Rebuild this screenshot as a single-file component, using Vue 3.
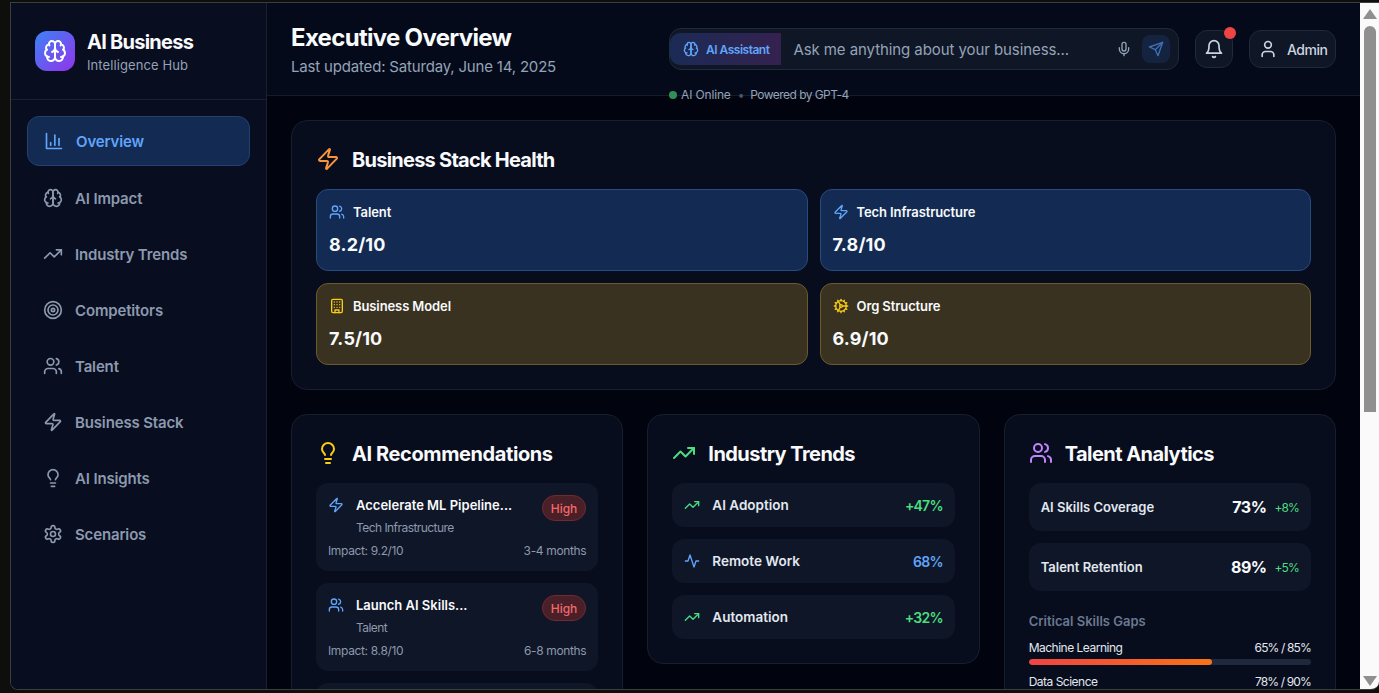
<script setup>
// icon bodies, all on a 24x24 grid
const icons = {
  brain: '<path d="M12 5a3 3 0 1 0-5.997.125 4 4 0 0 0-2.526 5.77 4 4 0 0 0 .556 6.588A4 4 0 1 0 12 18Z"/><path d="M12 5a3 3 0 1 1 5.997.125 4 4 0 0 1 2.526 5.77 4 4 0 0 1-.556 6.588A4 4 0 1 1 12 18Z"/><path d="M15 13a4.5 4.5 0 0 1-3-4 4.5 4.5 0 0 1-3 4"/><path d="M17.599 6.5a3 3 0 0 0 .399-1.375"/><path d="M6.003 5.125A3 3 0 0 0 6.401 6.5"/><path d="M3.477 10.896a4 4 0 0 1 .585-.396"/><path d="M19.938 10.5a4 4 0 0 1 .585.396"/><path d="M6 18a4 4 0 0 1-1.967-.516"/><path d="M19.967 17.484A4 4 0 0 1 18 18"/>',
  chart: '<path d="M3 3v18h18"/><path d="M18 17V9"/><path d="M13 17V5"/><path d="M8 17v-3"/>',
  trend: '<polyline points="22 7 13.5 15.5 8.5 10.5 2 17"/><polyline points="16 7 22 7 22 13"/>',
  target: '<circle cx="12" cy="12" r="10"/><circle cx="12" cy="12" r="6"/><circle cx="12" cy="12" r="2"/>',
  users: '<path d="M16 21v-2a4 4 0 0 0-4-4H6a4 4 0 0 0-4 4v2"/><circle cx="9" cy="7" r="4"/><path d="M22 21v-2a4 4 0 0 0-3-3.87"/><path d="M16 3.13a4 4 0 0 1 0 7.75"/>',
  zap: '<path d="M4 14a1 1 0 0 1-.78-1.63l9.9-10.2a.5.5 0 0 1 .86.46l-1.92 6.02A1 1 0 0 0 13 10h7a1 1 0 0 1 .78 1.63l-9.9 10.2a.5.5 0 0 1-.86-.46l1.92-6.02A1 1 0 0 0 11 14z"/>',
  bulb: '<path d="M15 14c.2-1 .7-1.7 1.5-2.5 1-.9 1.5-2.2 1.5-3.5A6 6 0 0 0 6 8c0 1 .2 2.2 1.5 3.5.7.7 1.3 1.5 1.5 2.5"/><path d="M9 18h6"/><path d="M10 22h4"/>',
  settings: '<path d="M12.22 2h-.44a2 2 0 0 0-2 2v.18a2 2 0 0 1-1 1.73l-.43.25a2 2 0 0 1-2 0l-.15-.08a2 2 0 0 0-2.73.73l-.22.38a2 2 0 0 0 .73 2.73l.15.1a2 2 0 0 1 1 1.72v.51a2 2 0 0 1-1 1.74l-.15.09a2 2 0 0 0-.73 2.73l.22.38a2 2 0 0 0 2.73.73l.15-.08a2 2 0 0 1 2 0l.43.25a2 2 0 0 1 1 1.73V20a2 2 0 0 0 2 2h.44a2 2 0 0 0 2-2v-.18a2 2 0 0 1 1-1.73l.43-.25a2 2 0 0 1 2 0l.15.08a2 2 0 0 0 2.73-.73l.22-.39a2 2 0 0 0-.73-2.73l-.15-.08a2 2 0 0 1-1-1.74v-.5a2 2 0 0 1 1-1.74l.15-.09a2 2 0 0 0 .73-2.73l-.22-.38a2 2 0 0 0-2.73-.73l-.15.08a2 2 0 0 1-2 0l-.43-.25a2 2 0 0 1-1-1.73V4a2 2 0 0 0-2-2z"/><circle cx="12" cy="12" r="3"/>',
  mic: '<path d="M12 2a3 3 0 0 0-3 3v7a3 3 0 0 0 6 0V5a3 3 0 0 0-3-3Z"/><path d="M19 10v2a7 7 0 0 1-14 0v-2"/><line x1="12" x2="12" y1="19" y2="22"/>',
  send: '<path d="m22 2-7 20-4-9-9-4Z"/><path d="M22 2 11 13"/>',
  bell: '<path d="M6 8a6 6 0 0 1 12 0c0 7 3 9 3 9H3s3-2 3-9"/><path d="M10.3 21a1.94 1.94 0 0 0 3.4 0"/>',
  user: '<path d="M19 21v-2a4 4 0 0 0-4-4H9a4 4 0 0 0-4 4v2"/><circle cx="12" cy="7" r="4"/>',
  building: '<rect width="16" height="20" x="4" y="2" rx="2" ry="2"/><path d="M9 22v-4h6v4"/><path d="M8 6h.01"/><path d="M16 6h.01"/><path d="M12 6h.01"/><path d="M12 10h.01"/><path d="M12 14h.01"/><path d="M16 10h.01"/><path d="M16 14h.01"/><path d="M8 10h.01"/><path d="M8 14h.01"/>',
  cog: '<path d="M12 20a8 8 0 1 0 0-16 8 8 0 0 0 0 16Z"/><path d="M12 14a2 2 0 1 0 0-4 2 2 0 0 0 0 4Z"/><path d="M12 2v2"/><path d="M12 22v-2"/><path d="m17 20.66-1-1.73"/><path d="M11 10.27 7 3.34"/><path d="m20.66 17-1.73-1"/><path d="m3.34 7 1.73 1"/><path d="M14 12h8"/><path d="M2 12h2"/><path d="m20.66 7-1.73 1"/><path d="m3.34 17 1.73-1"/><path d="m17 3.34-1 1.73"/><path d="M11 13.73l-4 6.93"/>',
  activity: '<path d="M22 12h-4l-3 9L9 3l-3 9H2"/>',
};

const navItems = [
  { label: 'Overview', icon: 'chart', active: true },
  { label: 'AI Impact', icon: 'brain' },
  { label: 'Industry Trends', icon: 'trend' },
  { label: 'Competitors', icon: 'target' },
  { label: 'Talent', icon: 'users' },
  { label: 'Business Stack', icon: 'zap' },
  { label: 'AI Insights', icon: 'bulb' },
  { label: 'Scenarios', icon: 'settings' },
];

const stack = [
  { label: 'Talent', value: '8.2/10', icon: 'users', tone: 'blue' },
  { label: 'Tech Infrastructure', value: '7.8/10', icon: 'zap', tone: 'blue' },
  { label: 'Business Model', value: '7.5/10', icon: 'building', tone: 'yellow' },
  { label: 'Org Structure', value: '6.9/10', icon: 'cog', tone: 'yellow' },
];

const recommendations = [
  { title: 'Accelerate ML Pipeline...', area: 'Tech Infrastructure', icon: 'zap', impact: '9.2/10', time: '3-4 months' },
  { title: 'Launch AI Skills...', area: 'Talent', icon: 'users', impact: '8.8/10', time: '6-8 months' },
];

const trends = [
  { label: 'AI Adoption', value: '+47%', icon: 'trend', tone: 'green' },
  { label: 'Remote Work', value: '68%', icon: 'activity', tone: 'blue' },
  { label: 'Automation', value: '+32%', icon: 'trend', tone: 'green' },
];

const talentStats = [
  { label: 'AI Skills Coverage', value: '73%', delta: '+8%' },
  { label: 'Talent Retention', value: '89%', delta: '+5%' },
];

const skillGaps = [
  { label: 'Machine Learning', current: 65, target: 85 },
  { label: 'Data Science', current: 78, target: 90 },
];
</script>

<template>
  <div class="window">
    <aside class="sidebar">
      <div class="brand">
        <div class="logo">
          <svg class="icon i24" viewBox="0 0 24 24" v-html="icons.brain"></svg>
        </div>
        <div>
          <div class="brand-name">AI Business</div>
          <div class="brand-sub">Intelligence Hub</div>
        </div>
      </div>
      <nav class="nav">
        <a v-for="item in navItems" :key="item.label" class="nav-item" :class="{ active: item.active }">
          <svg class="icon i20" viewBox="0 0 24 24" v-html="icons[item.icon]"></svg>
          <span>{{ item.label }}</span>
        </a>
      </nav>
    </aside>

    <div class="main">
      <header class="topbar">
        <div>
          <h1>Executive Overview</h1>
          <p>Last updated: Saturday, June 14, 2025</p>
        </div>
        <div class="top-actions">
          <div class="search-wrap">
            <div class="search">
              <div class="chip">
                <svg class="icon i16" viewBox="0 0 24 24" v-html="icons.brain"></svg>
                <span>AI Assistant</span>
              </div>
              <span class="placeholder">Ask me anything about your business...</span>
              <svg class="icon i16 mic" viewBox="0 0 24 24" v-html="icons.mic"></svg>
              <div class="send">
                <svg class="icon i16" viewBox="0 0 24 24" v-html="icons.send"></svg>
              </div>
            </div>
            <div class="status">
              <i class="dot"></i><span>AI Online</span><span class="sep">•</span><span class="powered">Powered by GPT-4</span>
            </div>
          </div>
          <div class="bell">
            <svg class="icon i20" viewBox="0 0 24 24" v-html="icons.bell"></svg>
            <i class="badge"></i>
          </div>
          <div class="admin">
            <svg class="icon i20" viewBox="0 0 24 24" v-html="icons.user"></svg>
            <span>Admin</span>
          </div>
        </div>
      </header>

      <main class="content">
        <section class="card">
          <h2 class="tight"><svg class="icon i24 orange" viewBox="0 0 24 24" v-html="icons.zap"></svg><span>Business Stack Health</span></h2>
          <div class="stack-grid">
            <div v-for="s in stack" :key="s.label" class="tile" :class="s.tone">
              <div class="tile-label">
                <svg class="icon i16" viewBox="0 0 24 24" v-html="icons[s.icon]"></svg>
                <span>{{ s.label }}</span>
              </div>
              <div class="tile-value">{{ s.value }}</div>
            </div>
          </div>
        </section>

        <div class="columns">
          <section class="card">
            <h2 class="loose"><svg class="icon i24 yellow-i" viewBox="0 0 24 24" v-html="icons.bulb"></svg><span>AI Recommendations</span></h2>
            <div class="list">
              <div v-for="r in recommendations" :key="r.title" class="rec">
                <div class="rec-top">
                  <svg class="icon i16 blue-i" viewBox="0 0 24 24" v-html="icons[r.icon]"></svg>
                  <div class="rec-text">
                    <div class="rec-title">{{ r.title }}</div>
                    <div class="rec-area">{{ r.area }}</div>
                  </div>
                  <span class="pill">High</span>
                </div>
                <div class="rec-meta">
                  <span>Impact: {{ r.impact }}</span>
                  <span>{{ r.time }}</span>
                </div>
              </div>
              <!-- next row only shows its top edge above the fold -->
              <div class="rec"></div>
            </div>
          </section>

          <section class="card">
            <h2><svg class="icon i24 green-i" viewBox="0 0 24 24" v-html="icons.trend"></svg><span>Industry Trends</span></h2>
            <div class="list">
              <div v-for="t in trends" :key="t.label" class="trend">
                <svg class="icon i16" :class="t.tone + '-i'" viewBox="0 0 24 24" v-html="icons[t.icon]"></svg>
                <span class="trend-label">{{ t.label }}</span>
                <span class="trend-value" :class="t.tone + '-i'">{{ t.value }}</span>
              </div>
            </div>
          </section>

          <section class="card">
            <h2><svg class="icon i24 purple-i" viewBox="0 0 24 24" v-html="icons.users"></svg><span>Talent Analytics</span></h2>
            <div class="list">
              <div v-for="t in talentStats" :key="t.label" class="stat">
                <span class="stat-label">{{ t.label }}</span>
                <span class="stat-value">{{ t.value }}</span>
                <span class="stat-delta">{{ t.delta }}</span>
              </div>
            </div>
            <h3>Critical Skills Gaps</h3>
            <div class="gaps">
              <div v-for="g in skillGaps" :key="g.label">
                <div class="gap-row">
                  <span>{{ g.label }}</span>
                  <span class="gap-val">{{ g.current }}% / {{ g.target }}%</span>
                </div>
                <div class="bar"><div class="bar-fill" :style="{ width: g.current + '%' }"></div></div>
              </div>
            </div>
          </section>
        </div>
      </main>
    </div>

    <div class="scrollbar">
      <svg class="arrow" viewBox="0 0 14 10"><path d="M7 0 14 10H0Z" /></svg>
      <div class="thumb"></div>
      <svg class="arrow bottom" viewBox="0 0 14 10"><path d="M0 0H14L7 10Z" /></svg>
    </div>
  </div>
</template>

<style>
html, body { margin: 0; height: 100%; overflow: hidden; background: #0e0e0c; }
</style>

<style scoped>
.window {
  box-sizing: border-box;
  display: flex;
  height: 688px;
  margin: 2px 0 0 10px;
  border: 1px solid #3d3d3d;
  border-right: none;
  border-bottom-left-radius: 8px;
  border-bottom-right-radius: 8px;
  overflow: hidden;
  background: #01040f;
  color: #f8fafc;
  font-family: Inter, "Noto Sans", sans-serif;
}
.icon { display: block; flex: none; fill: none; stroke: currentColor; stroke-width: 2; stroke-linecap: round; stroke-linejoin: round; }
.i16 { width: 16px; height: 16px; }
.i20 { width: 20px; height: 20px; }
.i24 { width: 24px; height: 24px; }

/* sidebar */
.sidebar { width: 256px; flex: none; box-sizing: border-box; background: #080d1f; border-right: 1px solid #1a2030; }
.brand { display: flex; align-items: center; gap: 12px; height: 97px; box-sizing: border-box; padding: 0 24px; border-bottom: 1px solid #1a2030; }
.logo { width: 40px; height: 40px; border-radius: 12px; background: linear-gradient(135deg, #3b82f6, #9333ea); display: flex; align-items: center; justify-content: center; color: #fff; }
.brand-name { padding-top: 2px; font-size: 20px; line-height: 26px; font-weight: 700; letter-spacing: -0.75px; }
.brand-sub { font-size: 13px; line-height: 20px; color: #94a3b8; letter-spacing: 0.1px; }
.nav { display: flex; flex-direction: column; gap: 8px; padding: 16px; }
.nav-item { display: flex; align-items: center; gap: 12px; padding: 12px 16px; border-radius: 12px; font-size: 15px; line-height: 24px; font-weight: 600; color: #8c99ae; letter-spacing: -0.15px; }
.nav-item span { padding-top: 2px; line-height: 22px; }
.nav-item.active { background: #132a52; border: 1px solid #24406f; color: #60a5fa; }

/* header */
.main { flex: 1; min-width: 0; display: flex; flex-direction: column; }
.topbar { flex: none; height: 93px; box-sizing: border-box; display: flex; align-items: center; justify-content: space-between; padding: 0 24px; background: #040a1a; border-bottom: 1px solid #141b2b; position: relative; }
h1 { margin: 0; padding-top: 2px; font-size: 24px; line-height: 30px; font-weight: 700; letter-spacing: -0.7px; }
.topbar p { margin: 4px 0 0; font-size: 15px; line-height: 20px; color: #94a3b8; letter-spacing: -0.18px; }
.top-actions { display: flex; align-items: center; gap: 16px; }
.search-wrap { position: relative; }
.search { width: 510px; height: 42px; box-sizing: border-box; display: flex; align-items: center; background: #0f1625; border: 1px solid #1f2a3b; border-radius: 12px; padding-right: 8px; }
.chip { display: flex; align-items: center; gap: 7px; height: 32px; padding: 0 12px 0 13px; border-radius: 10px 0 0 10px; background: linear-gradient(90deg, #1a2b55, #35214f); color: #60a5fa; font-size: 12px; font-weight: 600; letter-spacing: -0.5px; }
.placeholder { flex: 1; padding-left: 12px; font-size: 15px; color: #94a3b8; letter-spacing: -0.08px; }
.mic { color: #94a3b8; margin-right: 10px; }
.send { width: 28px; height: 28px; border-radius: 8px; background: #14233f; color: #3f6fb5; display: flex; align-items: center; justify-content: center; }
.status { position: absolute; left: 0; top: 59px; display: flex; align-items: center; font-size: 12px; line-height: 16px; color: #94a3b8; letter-spacing: -0.15px; }
.dot { width: 8px; height: 8px; border-radius: 50%; background: #2f8f57; margin-right: 4px; }
.sep { margin: 0 6px 0 7px; color: #475569; }
.powered { letter-spacing: -0.55px; }
.bell { position: relative; width: 38px; height: 38px; box-sizing: border-box; display: flex; align-items: center; justify-content: center; background: #0f1625; border: 1px solid #1f2a3b; border-radius: 12px; color: #cbd5e1; }
.badge { position: absolute; top: -4px; right: -4px; width: 12px; height: 12px; border-radius: 50%; background: #ef4444; }
.admin { width: 87px; height: 38px; box-sizing: border-box; display: flex; align-items: center; gap: 9px; padding: 0 8px; background: #0f1625; border: 1px solid #1f2a3b; border-radius: 12px; color: #cbd5e1; font-size: 14px; font-weight: 500; letter-spacing: -0.5px; }

/* content */
.content { flex: 1; min-height: 0; overflow: hidden; padding: 24px; display: flex; flex-direction: column; gap: 24px; }
.card { flex: none; box-sizing: border-box; padding: 24px; background: #080d1d; border: 1px solid #171e2e; border-radius: 16px; }
h2 { display: flex; align-items: center; gap: 12px; margin: 0 0 16px; font-size: 20px; line-height: 28px; font-weight: 700; letter-spacing: -0.55px; }
h2 span { padding-top: 2px; line-height: 26px; }
h2.tight { letter-spacing: -0.75px; }
h2.loose { letter-spacing: -0.4px; }
.orange { color: #fb923c; }
.yellow-i { color: #facc15; }
.green-i { color: #4ade80; }
.blue-i { color: #60a5fa; }
.purple-i { color: #c084fc; }
.stack-grid { display: grid; grid-template-columns: 1fr 1fr; gap: 12px; }
.tile { box-sizing: border-box; height: 82px; padding: 12px; border-radius: 12px; border: 1px solid; }
.tile.blue { background: #132a52; border-color: #274a80; }
.tile.blue .icon { color: #60a5fa; }
.tile.yellow { background: #3a3220; border-color: #6b5a2c; }
.tile.yellow .icon { color: #facc15; }
.tile-label { display: flex; align-items: center; gap: 8px; font-size: 13px; line-height: 20px; font-weight: 600; letter-spacing: -0.1px; }
.tile-value { margin-top: 9px; font-size: 18px; line-height: 28px; font-weight: 700; letter-spacing: 0.15px; }

.columns { display: grid; grid-template-columns: repeat(3, 1fr); gap: 24px; align-items: start; }
.list { display: flex; flex-direction: column; gap: 12px; }
.rec { box-sizing: border-box; height: 88px; padding: 12px; background: #0f1627; border-radius: 12px; }
.rec-top { display: flex; align-items: flex-start; gap: 12px; }
.rec-top .icon { margin-top: 2px; }
.rec-text { flex: 1; min-width: 0; }
.rec-title { font-size: 13px; line-height: 20px; font-weight: 600; }
.rec-area { margin-top: 5px; font-size: 12px; line-height: 16px; color: #8c99ae; letter-spacing: -0.55px; }
.pill { box-sizing: border-box; height: 26px; padding: 0 8px; display: flex; align-items: center; border-radius: 13px; background: #4a1f28; border: 1px solid #6f2a33; color: #ef6b6b; font-size: 12px; font-weight: 500; }
.rec-meta { display: flex; justify-content: space-between; margin-top: 7px; font-size: 12px; line-height: 16px; color: #8c99ae; letter-spacing: -0.35px; }
.trend { box-sizing: border-box; height: 44px; display: flex; align-items: center; gap: 12px; padding: 0 12px; background: #0f1627; border-radius: 12px; }
.trend-label { flex: 1; font-size: 13.5px; font-weight: 600; color: #e2e8f0; }
.trend-value { font-size: 14px; font-weight: 600; letter-spacing: -0.8px; }
.stat { box-sizing: border-box; height: 48px; display: flex; align-items: center; padding: 0 12px; background: #0f1627; border-radius: 12px; }
.stat-label { flex: 1; font-size: 13px; font-weight: 600; color: #e2e8f0; }
.stat-value { font-size: 16px; font-weight: 700; letter-spacing: -0.5px; }
.stat-delta { margin-left: 8px; font-size: 12px; color: #4ade80; letter-spacing: -0.85px; }
h3 { margin: 20px 0 9px; font-size: 13px; line-height: 20px; font-weight: 600; color: #6b7890; }
.gaps { display: flex; flex-direction: column; gap: 9px; }
.gap-row { display: flex; justify-content: space-between; font-size: 12px; line-height: 16px; color: #e2e8f0; margin-bottom: 3px; letter-spacing: -0.5px; }
.gap-val { letter-spacing: -0.85px; }
.bar { height: 6px; border-radius: 3px; background: #1e293b; overflow: hidden; }
.bar-fill { height: 100%; border-radius: 3px; background: linear-gradient(90deg, #ef4444, #f97316); }

/* browser scrollbar as it appears in the capture */
.scrollbar { width: 19px; box-sizing: border-box; padding-left: 4px; flex: none; background: #fafafa; display: flex; flex-direction: column; align-items: flex-start; }
.arrow { width: 14px; height: 10px; fill: #8f8f8f; margin: 6px 0 0 -1px; }
.arrow.bottom { margin: auto 0 3px -1px; }
.thumb { width: 12px; height: 386px; margin-top: 7px; background: #8f8f8f; border-radius: 6px 6px 0 0; }
</style>
